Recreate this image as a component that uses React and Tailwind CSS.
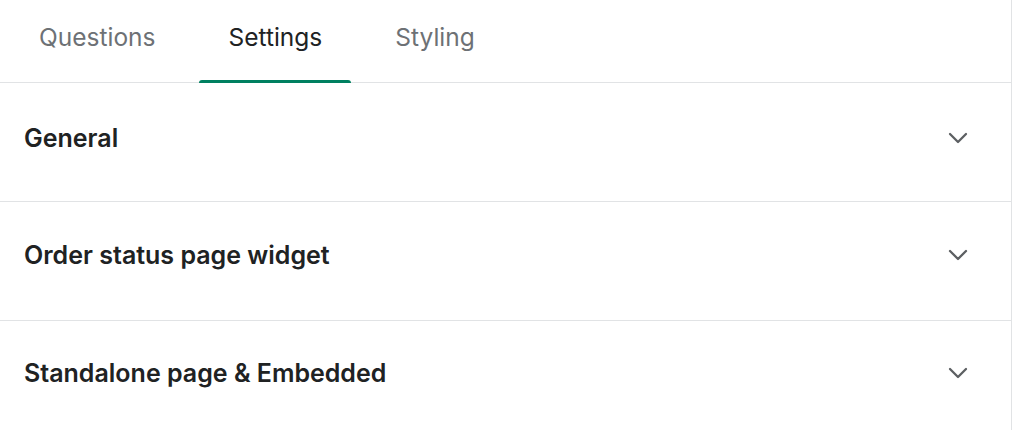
export default function App() {
  const tabs = [
    { label: "Questions", active: false },
    { label: "Settings", active: true },
    { label: "Styling", active: false },
  ];
  const sections = [
    { title: "General", pad: "pt-[40px]" },
    { title: "Order status page widget", pad: "pt-[38px]" },
    { title: "Standalone page & Embedded", pad: "pt-[37px]" },
  ];
  return (
    <div
      className="w-[1012px] h-[430px] overflow-hidden bg-white border-r border-[#e1e3e5]"
      style={{ fontFamily: "Inter, 'Noto Sans', sans-serif" }}
    >
      <div className="flex h-[83px] border-b border-[#e1e3e5] pl-[10px] gap-[15px]">
        {tabs.map((t) => (
          <div key={t.label} className="relative flex items-center h-full px-[29px] pb-[8px]">
            <span
              className={
                "text-[24.5px] " + (t.active ? "text-[#202223]" : "text-[#6d7175]")
              }
            >
              {t.label}
            </span>
            {t.active && (
              <div className="absolute left-0 right-0 bottom-[-1px] h-[3px] rounded-t-[3px] bg-[#008060]" />
            )}
          </div>
        ))}
      </div>
      {sections.map((s, i) => (
        <div
          key={s.title}
          className={
            "h-[119px] pl-[24px] pr-[43px] " +
            s.pad +
            " " +
            (i < sections.length - 1 ? "border-b border-[#e1e3e5]" : "")
          }
        >
          <div className="flex items-center justify-between h-[30px]">
            <span className="text-[25px] leading-[30px] font-semibold text-[#202223]">
              {s.title}
            </span>
            <svg width="20" height="20" viewBox="0 0 20 20" fill="none">
              <path
                d="M2 6l8 8 8-8"
                stroke="#5c5f62"
                strokeWidth="2.3"
                strokeLinecap="round"
                strokeLinejoin="round"
              />
            </svg>
          </div>
        </div>
      ))}
    </div>
  );
}
